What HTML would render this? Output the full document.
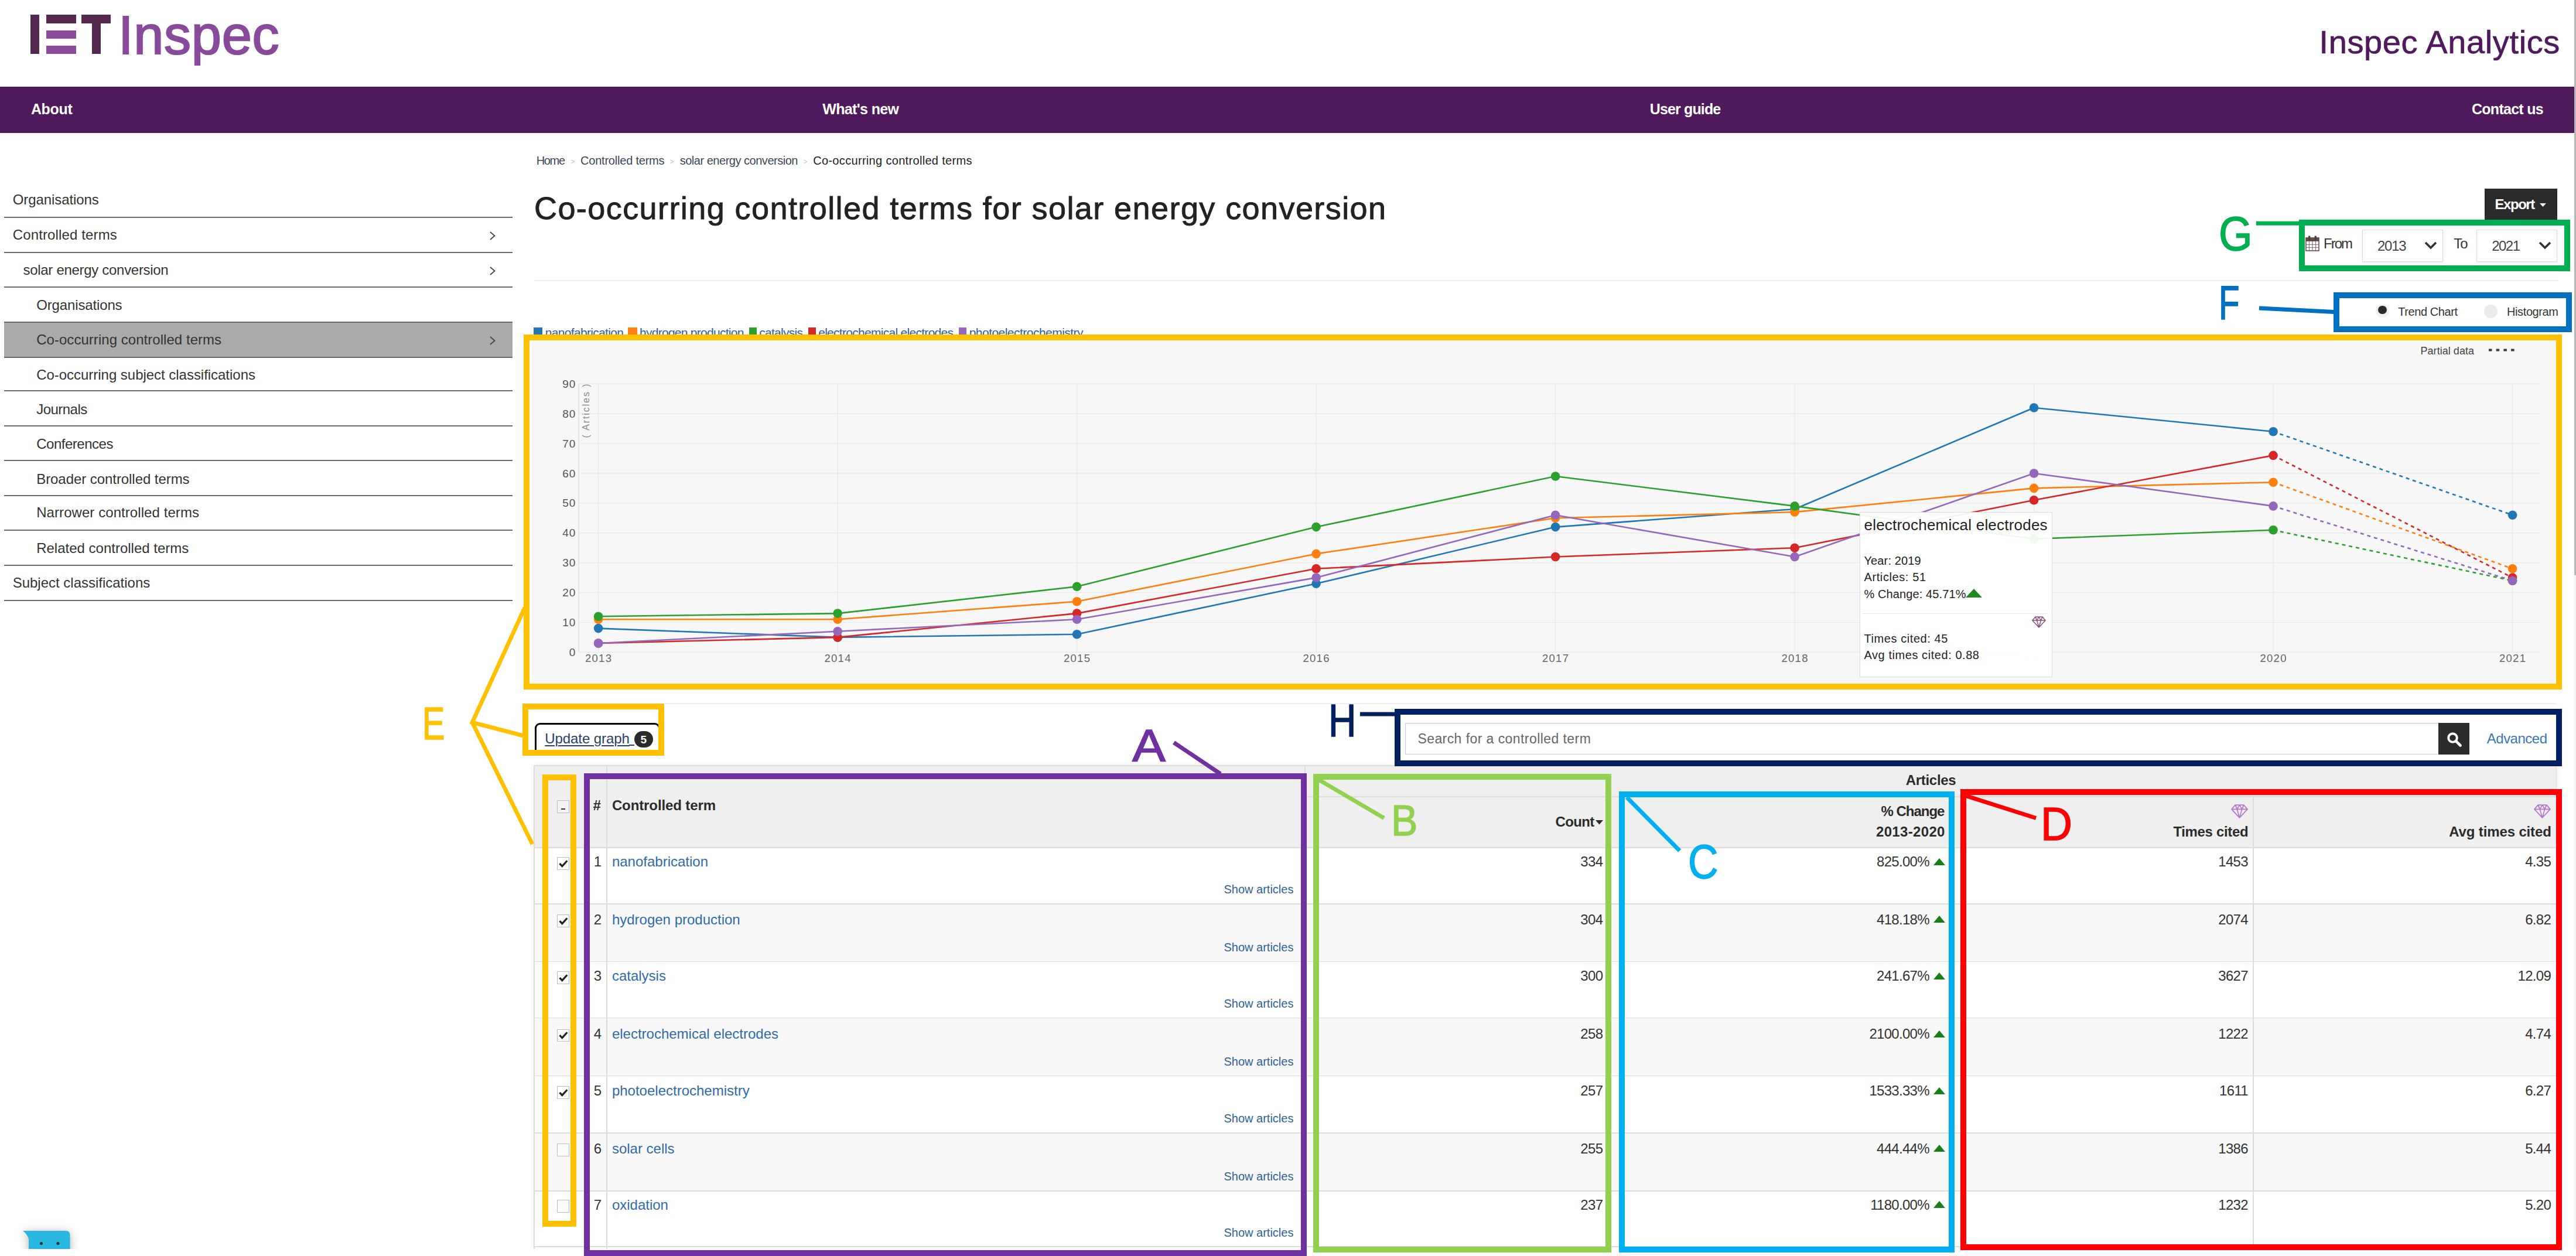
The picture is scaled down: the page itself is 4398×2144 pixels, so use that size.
<!DOCTYPE html>
<html lang="en">
<head>
<meta charset="utf-8">
<title>Inspec Analytics - Co-occurring controlled terms for solar energy conversion</title>
<style>
html,body{margin:0;padding:0;background:#fff;}
body{width:4398px;height:2144px;position:relative;overflow:hidden;font-family:"Liberation Sans",sans-serif;font-size:24px;color:#333;}
.a{position:absolute;white-space:nowrap;}
.bx{box-sizing:content-box;}
svg{position:absolute;overflow:visible;}
</style>
</head>
<body>
<div class="a" role="img" aria-label="IET" title="IET" style="left:0;top:0;width:200px;height:120px;">
<div class="a" style="left:52.4px;top:25.3px;width:15.0px;height:66.7px;background:#552850;"></div>
<div class="a" style="left:79.4px;top:25.3px;width:50.8px;height:14.5px;background:#552850;"></div>
<div class="a" style="left:79.4px;top:51.9px;width:50.8px;height:14.0px;background:#8b4c9c;"></div>
<div class="a" style="left:79.4px;top:78.3px;width:50.8px;height:13.7px;background:#8b4c9c;"></div>
<div class="a" style="left:139.0px;top:25.3px;width:50.3px;height:14.5px;background:#552850;"></div>
<div class="a" style="left:156.7px;top:25.3px;width:15.3px;height:66.7px;background:#552850;"></div>
</div>
<div class="a" style="top:14.1px;font-size:92px;line-height:92px;color:#8a4a9b;letter-spacing:0.69px;left:202.0px;-webkit-text-stroke:2.2px #8a4a9b;">Inspec</div>
<div class="a" style="top:43.8px;font-size:56px;line-height:56px;color:#4f1a5c;letter-spacing:0.62px;left:3959.5px;-webkit-text-stroke:0.7px #4f1a5c;">Inspec Analytics</div>
<div class="a" style="left:0.0px;top:148.0px;width:4395.0px;height:79.0px;background:#4f1a5c;"></div>
<div class="a" style="top:174.4px;font-size:25px;line-height:25px;color:#fff;font-weight:bold;letter-spacing:-0.32px;left:52.9px;">About</div>
<div class="a" style="top:174.4px;font-size:25px;line-height:25px;color:#fff;font-weight:bold;letter-spacing:-0.65px;left:1404.3px;">What's new</div>
<div class="a" style="top:174.4px;font-size:25px;line-height:25px;color:#fff;font-weight:bold;letter-spacing:-0.86px;left:2816.8px;">User guide</div>
<div class="a" style="top:174.4px;font-size:25px;line-height:25px;color:#fff;font-weight:bold;letter-spacing:-0.73px;left:4220.0px;">Contact us</div>
<div class="a" style="left:4395.0px;top:0.0px;width:3.0px;height:2132.0px;background:#f4f4f4;"></div>
<div class="a" style="left:4395.0px;top:0.0px;width:3.0px;height:981.5px;background:#b9b9b9;"></div>
<div class="a" style="left:7.0px;top:549.8px;width:867.6px;height:60.5px;background:#aaaaaa;"></div>
<div class="a" style="top:329.2px;font-size:24px;line-height:24px;letter-spacing:-0.08px;left:21.7px;">Organisations</div>
<div class="a" style="left:7.0px;top:369.9px;width:867.6px;height:2.0px;background:#6a6a6a;"></div>
<div class="a" style="top:389.3px;font-size:24px;line-height:24px;letter-spacing:0.14px;left:21.7px;">Controlled terms</div>
<div class="a" style="left:7.0px;top:429.7px;width:867.6px;height:2.0px;background:#6a6a6a;"></div>
<svg style="left:834px;top:392.3px" width="14" height="20" viewBox="0 0 14 20"><path d="M3 4 L10.5 10.5 L3 17" fill="none" stroke="#444" stroke-width="1.8"/></svg>
<div class="a" style="top:449.4px;font-size:24px;line-height:24px;letter-spacing:-0.30px;left:39.5px;">solar energy conversion</div>
<div class="a" style="left:7.0px;top:489.4px;width:867.6px;height:2.0px;background:#6a6a6a;"></div>
<svg style="left:834px;top:452.4px" width="14" height="20" viewBox="0 0 14 20"><path d="M3 4 L10.5 10.5 L3 17" fill="none" stroke="#444" stroke-width="1.8"/></svg>
<div class="a" style="top:508.8px;font-size:24px;line-height:24px;letter-spacing:-0.14px;left:62.2px;">Organisations</div>
<div class="a" style="left:7.0px;top:548.8px;width:867.6px;height:2.0px;background:#6a6a6a;"></div>
<div class="a" style="top:568.2px;font-size:24px;line-height:24px;letter-spacing:0.04px;left:62.2px;">Co-occurring controlled terms</div>
<div class="a" style="left:7.0px;top:609.3px;width:867.6px;height:2.0px;background:#6a6a6a;"></div>
<svg style="left:834px;top:571.2px" width="14" height="20" viewBox="0 0 14 20"><path d="M3 4 L10.5 10.5 L3 17" fill="none" stroke="#444" stroke-width="1.8"/></svg>
<div class="a" style="top:627.6px;font-size:24px;line-height:24px;letter-spacing:-0.03px;left:62.2px;">Co-occurring subject classifications</div>
<div class="a" style="left:7.0px;top:665.9px;width:867.6px;height:2.0px;background:#6a6a6a;"></div>
<div class="a" style="top:687.0px;font-size:24px;line-height:24px;letter-spacing:-0.53px;left:62.2px;">Journals</div>
<div class="a" style="left:7.0px;top:725.6px;width:867.6px;height:2.0px;background:#6a6a6a;"></div>
<div class="a" style="top:746.4px;font-size:24px;line-height:24px;letter-spacing:-0.48px;left:62.2px;">Conferences</div>
<div class="a" style="left:7.0px;top:785.3px;width:867.6px;height:2.0px;background:#6a6a6a;"></div>
<div class="a" style="top:806.2px;font-size:24px;line-height:24px;letter-spacing:-0.06px;left:62.2px;">Broader controlled terms</div>
<div class="a" style="left:7.0px;top:845.0px;width:867.6px;height:2.0px;background:#6a6a6a;"></div>
<div class="a" style="top:863.3px;font-size:24px;line-height:24px;letter-spacing:0.07px;left:62.2px;">Narrower controlled terms</div>
<div class="a" style="left:7.0px;top:904.4px;width:867.6px;height:2.0px;background:#6a6a6a;"></div>
<div class="a" style="top:923.5px;font-size:24px;line-height:24px;letter-spacing:0.00px;left:62.2px;">Related controlled terms</div>
<div class="a" style="left:7.0px;top:964.2px;width:867.6px;height:2.0px;background:#6a6a6a;"></div>
<div class="a" style="top:982.9px;font-size:24px;line-height:24px;letter-spacing:-0.01px;left:21.7px;">Subject classifications</div>
<div class="a" style="left:7.0px;top:1024.0px;width:867.6px;height:2.0px;background:#6a6a6a;"></div>
<div class="a" style="left:7.0px;top:548.8px;width:867.6px;height:2.0px;background:#6a6a6a;"></div>
<div class="a" style="top:263.8px;font-size:20px;line-height:20px;color:#3a4756;letter-spacing:-1.32px;left:915.7px;">Home</div>
<div class="a" style="top:269.5px;font-size:12px;line-height:12px;color:#c4c4c4;left:974.5px;">&gt;</div>
<div class="a" style="top:263.8px;font-size:20px;line-height:20px;color:#3a4756;letter-spacing:-0.21px;left:991.0px;">Controlled terms</div>
<div class="a" style="top:269.5px;font-size:12px;line-height:12px;color:#c4c4c4;left:1143.5px;">&gt;</div>
<div class="a" style="top:263.8px;font-size:20px;line-height:20px;color:#3a4756;letter-spacing:-0.48px;left:1160.7px;">solar energy conversion</div>
<div class="a" style="top:269.5px;font-size:12px;line-height:12px;color:#c4c4c4;left:1371.5px;">&gt;</div>
<div class="a" style="top:263.8px;font-size:20px;line-height:20px;color:#222;letter-spacing:0.32px;left:1388.2px;">Co-occurring controlled terms</div>
<div class="a" style="top:328.3px;font-size:54px;line-height:54px;color:#222;letter-spacing:1.42px;left:912.0px;-webkit-text-stroke:0.9px #222;">Co-occurring controlled terms for solar energy conversion</div>
<div class="a" style="left:912.0px;top:478.0px;width:3456.0px;height:1.5px;background:#eeeeee;"></div>
<div class="a" style="left:4241.5px;top:321.7px;width:124.0px;height:54.0px;background:#2b2b2b;"></div>
<div class="a" style="top:336.9px;font-size:24px;line-height:24px;color:#fff;font-weight:bold;letter-spacing:-1.48px;left:4259.6px;">Export</div>
<svg style="left:4335.5px;top:347px" width="11" height="6" viewBox="0 0 11 6"><path d="M0 0 H11 L5.5 6 Z" fill="#fff"/></svg>
<svg style="left:3936px;top:402px" width="24" height="27" viewBox="0 0 24 27"><rect x="1" y="4" width="22" height="22" fill="#fff" stroke="#6b4a4a" stroke-width="1.6"/><rect x="1" y="4" width="22" height="6" fill="#6b4a4a"/><path d="M1 15.5H23 M1 20.5H23 M6.5 10V26 M12 10V26 M17.5 10V26" stroke="#8a6f7a" stroke-width="1.2"/><rect x="5" y="0.5" width="3.4" height="7" rx="1.2" fill="#444"/><rect x="15.6" y="0.5" width="3.4" height="7" rx="1.2" fill="#444"/></svg>
<div class="a" style="top:404.4px;font-size:24px;line-height:24px;letter-spacing:-2.00px;left:3967.0px;">From</div>
<div class="a" style="top:404.4px;font-size:24px;line-height:24px;letter-spacing:-0.95px;left:4189.2px;">To</div>
<div class="a" style="left:4033.3px;top:391.6px;width:136.2px;height:53px;border:1px solid #ddd;background:#fff;box-shadow:0 1px 2px rgba(0,0,0,.12);"></div>
<div class="a" style="top:408.4px;font-size:24px;line-height:24px;color:#444;letter-spacing:-1.23px;left:4059.0px;">2013</div>
<svg style="left:4139px;top:411.5px" width="22" height="14" viewBox="0 0 22 14"><path d="M2 2 L11 11 L20 2" fill="none" stroke="#333" stroke-width="3.6"/></svg>
<div class="a" style="left:4228px;top:391.6px;width:136.0px;height:53px;border:1px solid #ddd;background:#fff;box-shadow:0 1px 2px rgba(0,0,0,.12);"></div>
<div class="a" style="top:408.4px;font-size:24px;line-height:24px;color:#444;letter-spacing:-1.53px;left:4254.2px;">2021</div>
<svg style="left:4333.6px;top:411.5px" width="22" height="14" viewBox="0 0 22 14"><path d="M2 2 L11 11 L20 2" fill="none" stroke="#333" stroke-width="3.6"/></svg>
<div class="a" style="left:4055.5px;top:519px;width:23px;height:23px;border-radius:50%;background:#f0f0f0;"></div>
<div class="a" style="left:4059.8px;top:521.7px;width:14.8px;height:14.8px;border-radius:50%;background:#2a2a2a;"></div>
<div class="a" style="left:4241.3px;top:519.5px;width:23px;height:23px;border-radius:50%;background:#eaeaea;"></div>
<div class="a" style="top:522.4px;font-size:20px;line-height:20px;letter-spacing:-0.43px;left:4094.3px;">Trend Chart</div>
<div class="a" style="top:522.4px;font-size:20px;line-height:20px;letter-spacing:-0.39px;left:4280.0px;">Histogram</div>
<div class="a" style="left:911.4px;top:559.0px;width:15.0px;height:15.0px;background:#1f77b4;"></div>
<div class="a" style="top:557.2px;font-size:21px;line-height:21px;color:#2a5d9c;letter-spacing:-0.67px;left:930.7px;">nanofabrication</div>
<div class="a" style="left:1072.2px;top:559.0px;width:15.5px;height:15.0px;background:#ff7f0e;"></div>
<div class="a" style="top:557.2px;font-size:21px;line-height:21px;color:#2a5d9c;letter-spacing:-0.73px;left:1092.0px;">hydrogen production</div>
<div class="a" style="left:1278.5px;top:559.0px;width:13.4px;height:15.0px;background:#2ca02c;"></div>
<div class="a" style="top:557.2px;font-size:21px;line-height:21px;color:#2a5d9c;letter-spacing:-0.72px;left:1296.2px;">catalysis</div>
<div class="a" style="left:1379.6px;top:559.0px;width:13.3px;height:15.0px;background:#d62728;"></div>
<div class="a" style="top:557.2px;font-size:21px;line-height:21px;color:#2a5d9c;letter-spacing:-0.71px;left:1397.2px;">electrochemical electrodes</div>
<div class="a" style="left:1636.7px;top:559.0px;width:12.9px;height:15.0px;background:#9467bd;"></div>
<div class="a" style="top:557.2px;font-size:21px;line-height:21px;color:#2a5d9c;letter-spacing:-0.53px;left:1654.7px;">photoelectrochemistry</div>
<div class="a" style="left:904.0px;top:581.0px;width:3461.0px;height:586.0px;background:#fff;"></div>
<div class="a" style="left:908.5px;top:582.0px;width:3456.5px;height:585.0px;background:#f7f7f7;box-shadow:0 0 3px 1px #f7f7f7;"></div>
<svg style="left:0;top:0" width="4398" height="1180" viewBox="0 0 4398 1180" font-family="Liberation Sans, sans-serif">
<line x1="988" x2="4337.4" y1="1113.3" y2="1113.3" stroke="#e9e9e9" stroke-width="1.4"/>
<line x1="988" x2="4337.4" y1="1062.4" y2="1062.4" stroke="#e9e9e9" stroke-width="1.4"/>
<line x1="988" x2="4337.4" y1="1011.5" y2="1011.5" stroke="#e9e9e9" stroke-width="1.4"/>
<line x1="988" x2="4337.4" y1="960.6" y2="960.6" stroke="#e9e9e9" stroke-width="1.4"/>
<line x1="988" x2="4337.4" y1="909.7" y2="909.7" stroke="#e9e9e9" stroke-width="1.4"/>
<line x1="988" x2="4337.4" y1="858.8" y2="858.8" stroke="#e9e9e9" stroke-width="1.4"/>
<line x1="988" x2="4337.4" y1="808.0" y2="808.0" stroke="#e9e9e9" stroke-width="1.4"/>
<line x1="988" x2="4337.4" y1="757.1" y2="757.1" stroke="#e9e9e9" stroke-width="1.4"/>
<line x1="988" x2="4337.4" y1="706.2" y2="706.2" stroke="#e9e9e9" stroke-width="1.4"/>
<line x1="988" x2="4337.4" y1="655.3" y2="655.3" stroke="#e9e9e9" stroke-width="1.4"/>
<line x1="1021.6" x2="1021.6" y1="655.3" y2="1113.3" stroke="#e9e9e9" stroke-width="1.4"/>
<line x1="1430.1" x2="1430.1" y1="655.3" y2="1113.3" stroke="#e9e9e9" stroke-width="1.4"/>
<line x1="1838.6" x2="1838.6" y1="655.3" y2="1113.3" stroke="#e9e9e9" stroke-width="1.4"/>
<line x1="2247.1" x2="2247.1" y1="655.3" y2="1113.3" stroke="#e9e9e9" stroke-width="1.4"/>
<line x1="2655.6" x2="2655.6" y1="655.3" y2="1113.3" stroke="#e9e9e9" stroke-width="1.4"/>
<line x1="3064.1" x2="3064.1" y1="655.3" y2="1113.3" stroke="#e9e9e9" stroke-width="1.4"/>
<line x1="3472.6" x2="3472.6" y1="655.3" y2="1113.3" stroke="#e9e9e9" stroke-width="1.4"/>
<line x1="3881.1" x2="3881.1" y1="655.3" y2="1113.3" stroke="#e9e9e9" stroke-width="1.4"/>
<line x1="4289.6" x2="4289.6" y1="655.3" y2="1113.3" stroke="#e9e9e9" stroke-width="1.4"/>
<line x1="988" x2="988" y1="655.3" y2="1113.3" stroke="#e2e2e2" stroke-width="1.6"/>
<text x="983.4" y="1119.8" text-anchor="end" font-size="19" fill="#555" letter-spacing="1">0</text>
<text x="983.4" y="1068.9" text-anchor="end" font-size="19" fill="#555" letter-spacing="1">10</text>
<text x="983.4" y="1018.0" text-anchor="end" font-size="19" fill="#555" letter-spacing="1">20</text>
<text x="983.4" y="967.1" text-anchor="end" font-size="19" fill="#555" letter-spacing="1">30</text>
<text x="983.4" y="916.2" text-anchor="end" font-size="19" fill="#555" letter-spacing="1">40</text>
<text x="983.4" y="865.3" text-anchor="end" font-size="19" fill="#555" letter-spacing="1">50</text>
<text x="983.4" y="814.5" text-anchor="end" font-size="19" fill="#555" letter-spacing="1">60</text>
<text x="983.4" y="763.6" text-anchor="end" font-size="19" fill="#555" letter-spacing="1">70</text>
<text x="983.4" y="712.7" text-anchor="end" font-size="19" fill="#555" letter-spacing="1">80</text>
<text x="983.4" y="661.8" text-anchor="end" font-size="19" fill="#555" letter-spacing="1">90</text>
<text x="1022.1" y="1130.3" text-anchor="middle" font-size="18.5" fill="#666" letter-spacing="1.3">2013</text>
<text x="1430.6" y="1130.3" text-anchor="middle" font-size="18.5" fill="#666" letter-spacing="1.3">2014</text>
<text x="1839.1" y="1130.3" text-anchor="middle" font-size="18.5" fill="#666" letter-spacing="1.3">2015</text>
<text x="2247.6" y="1130.3" text-anchor="middle" font-size="18.5" fill="#666" letter-spacing="1.3">2016</text>
<text x="2656.1" y="1130.3" text-anchor="middle" font-size="18.5" fill="#666" letter-spacing="1.3">2017</text>
<text x="3064.6" y="1130.3" text-anchor="middle" font-size="18.5" fill="#666" letter-spacing="1.3">2018</text>
<text x="3473.1" y="1130.3" text-anchor="middle" font-size="18.5" fill="#e6e6e6" letter-spacing="1.3">2019</text>
<text x="3881.6" y="1130.3" text-anchor="middle" font-size="18.5" fill="#666" letter-spacing="1.3">2020</text>
<text x="4290.1" y="1130.3" text-anchor="middle" font-size="18.5" fill="#666" letter-spacing="1.3">2021</text>
<text transform="translate(1006,700.6) rotate(-90)" text-anchor="middle" font-size="16" fill="#8a8a8a" letter-spacing="1.9">( Articles )</text>
<polyline points="1021.6,1072.6 1430.1,1087.9 1838.6,1082.8 2247.1,996.3 2655.6,899.6 3064.1,869.0 3472.6,696.0 3881.1,736.7" fill="none" stroke="#1f77b4" stroke-width="2.6" stroke-linejoin="round"/>
<line x1="3881.1" y1="736.7" x2="4289.6" y2="879.2" stroke="#1f77b4" stroke-width="2.6" stroke-dasharray="6 6"/>
<polyline points="1021.6,1057.3 1430.1,1057.3 1838.6,1026.8 2247.1,945.4 2655.6,884.3 3064.1,874.1 3472.6,833.4 3881.1,823.2" fill="none" stroke="#ff7f0e" stroke-width="2.6" stroke-linejoin="round"/>
<line x1="3881.1" y1="823.2" x2="4289.6" y2="970.8" stroke="#ff7f0e" stroke-width="2.6" stroke-dasharray="6 6"/>
<polyline points="1021.6,1052.2 1430.1,1047.1 1838.6,1001.3 2247.1,899.6 2655.6,813.0 3064.1,863.9 3472.6,919.9 3881.1,904.7" fill="none" stroke="#2ca02c" stroke-width="2.6" stroke-linejoin="round"/>
<line x1="3881.1" y1="904.7" x2="4289.6" y2="991.2" stroke="#2ca02c" stroke-width="2.6" stroke-dasharray="6 6"/>
<polyline points="1021.6,1098.0 1430.1,1087.9 1838.6,1047.1 2247.1,970.8 2655.6,950.5 3064.1,935.2 3472.6,853.8 3881.1,777.4" fill="none" stroke="#d62728" stroke-width="2.6" stroke-linejoin="round"/>
<line x1="3881.1" y1="777.4" x2="4289.6" y2="986.1" stroke="#d62728" stroke-width="2.6" stroke-dasharray="6 6"/>
<polyline points="1021.6,1098.0 1430.1,1077.7 1838.6,1057.3 2247.1,986.1 2655.6,879.2 3064.1,950.5 3472.6,808.0 3881.1,863.9" fill="none" stroke="#9467bd" stroke-width="2.6" stroke-linejoin="round"/>
<line x1="3881.1" y1="863.9" x2="4289.6" y2="991.2" stroke="#9467bd" stroke-width="2.6" stroke-dasharray="6 6"/>
<circle cx="1021.6" cy="1072.6" r="7.8" fill="#1f77b4"/>
<circle cx="1430.1" cy="1087.9" r="7.8" fill="#1f77b4"/>
<circle cx="1838.6" cy="1082.8" r="7.8" fill="#1f77b4"/>
<circle cx="2247.1" cy="996.3" r="7.8" fill="#1f77b4"/>
<circle cx="2655.6" cy="899.6" r="7.8" fill="#1f77b4"/>
<circle cx="3064.1" cy="869.0" r="7.8" fill="#1f77b4"/>
<circle cx="3472.6" cy="696.0" r="7.8" fill="#1f77b4"/>
<circle cx="3881.1" cy="736.7" r="7.8" fill="#1f77b4"/>
<circle cx="4289.6" cy="879.2" r="7.8" fill="#1f77b4"/>
<circle cx="1021.6" cy="1057.3" r="7.8" fill="#ff7f0e"/>
<circle cx="1430.1" cy="1057.3" r="7.8" fill="#ff7f0e"/>
<circle cx="1838.6" cy="1026.8" r="7.8" fill="#ff7f0e"/>
<circle cx="2247.1" cy="945.4" r="7.8" fill="#ff7f0e"/>
<circle cx="2655.6" cy="884.3" r="7.8" fill="#ff7f0e"/>
<circle cx="3064.1" cy="874.1" r="7.8" fill="#ff7f0e"/>
<circle cx="3472.6" cy="833.4" r="7.8" fill="#ff7f0e"/>
<circle cx="3881.1" cy="823.2" r="7.8" fill="#ff7f0e"/>
<circle cx="4289.6" cy="970.8" r="7.8" fill="#ff7f0e"/>
<circle cx="1021.6" cy="1052.2" r="7.8" fill="#2ca02c"/>
<circle cx="1430.1" cy="1047.1" r="7.8" fill="#2ca02c"/>
<circle cx="1838.6" cy="1001.3" r="7.8" fill="#2ca02c"/>
<circle cx="2247.1" cy="899.6" r="7.8" fill="#2ca02c"/>
<circle cx="2655.6" cy="813.0" r="7.8" fill="#2ca02c"/>
<circle cx="3064.1" cy="863.9" r="7.8" fill="#2ca02c"/>
<circle cx="3472.6" cy="919.9" r="7.8" fill="#2ca02c"/>
<circle cx="3881.1" cy="904.7" r="7.8" fill="#2ca02c"/>
<circle cx="4289.6" cy="991.2" r="7.8" fill="#2ca02c"/>
<circle cx="1021.6" cy="1098.0" r="7.8" fill="#d62728"/>
<circle cx="1430.1" cy="1087.9" r="7.8" fill="#d62728"/>
<circle cx="1838.6" cy="1047.1" r="7.8" fill="#d62728"/>
<circle cx="2247.1" cy="970.8" r="7.8" fill="#d62728"/>
<circle cx="2655.6" cy="950.5" r="7.8" fill="#d62728"/>
<circle cx="3064.1" cy="935.2" r="7.8" fill="#d62728"/>
<circle cx="3472.6" cy="853.8" r="7.8" fill="#d62728"/>
<circle cx="3881.1" cy="777.4" r="7.8" fill="#d62728"/>
<circle cx="4289.6" cy="986.1" r="7.8" fill="#d62728"/>
<circle cx="1021.6" cy="1098.0" r="7.8" fill="#9467bd"/>
<circle cx="1430.1" cy="1077.7" r="7.8" fill="#9467bd"/>
<circle cx="1838.6" cy="1057.3" r="7.8" fill="#9467bd"/>
<circle cx="2247.1" cy="986.1" r="7.8" fill="#9467bd"/>
<circle cx="2655.6" cy="879.2" r="7.8" fill="#9467bd"/>
<circle cx="3064.1" cy="950.5" r="7.8" fill="#9467bd"/>
<circle cx="3472.6" cy="808.0" r="7.8" fill="#9467bd"/>
<circle cx="3881.1" cy="863.9" r="7.8" fill="#9467bd"/>
<circle cx="4289.6" cy="991.2" r="7.8" fill="#9467bd"/>
<text x="4132.5" y="604.5" font-size="18" fill="#444" textLength="91.5" lengthAdjust="spacing">Partial data</text>
<rect x="4249.0" y="595.5" width="5.5" height="4" fill="#4a3340"/>
<rect x="4261.7" y="595.5" width="5.5" height="4" fill="#4a3340"/>
<rect x="4274.4" y="595.5" width="5.5" height="4" fill="#4a3340"/>
<rect x="4287.1" y="595.5" width="5.5" height="4" fill="#4a3340"/>
</svg>
<div class="a" style="left:3175px;top:873.6px;width:327px;height:280px;background:rgba(255,255,255,.93);border:1px solid #ddd;"></div>
<div class="a" style="top:883.0px;font-size:26px;line-height:26px;color:#222;letter-spacing:0.21px;left:3182.5px;">electrochemical electrodes</div>
<div class="a" style="top:946.6px;font-size:20px;line-height:20px;color:#222;letter-spacing:0.12px;left:3182.5px;">Year: 2019</div>
<div class="a" style="top:974.6px;font-size:20px;line-height:20px;color:#222;letter-spacing:0.60px;left:3182.5px;">Articles: 51</div>
<div class="a" style="top:1004.1px;font-size:20px;line-height:20px;color:#222;letter-spacing:0.11px;left:3182.5px;">% Change: 45.71%</div>
<svg style="left:3356px;top:1005px" width="28" height="15" viewBox="0 0 28 15"><path d="M0 15 L14 0 L28 15 Z" fill="#1e8a1e"/></svg>
<div class="a" style="left:3180.0px;top:1047.0px;width:317.0px;height:1.2px;background:#e5e5e5;"></div>
<svg style="left:3468.5px;top:1052px" width="24" height="20" viewBox="0 0 28 23"><path d="M1 8 L7 1 H21 L27 8 L14 22 Z M1 8 H27 M7 1 L10 8 L14 22 L18 8 L21 1 M10 8 L14 1 L18 8" fill="none" stroke="#8b4f7d" stroke-width="1.7" stroke-linejoin="round"/></svg>
<div class="a" style="top:1079.6px;font-size:20px;line-height:20px;color:#222;letter-spacing:0.57px;left:3182.5px;">Times cited: 45</div>
<div class="a" style="top:1107.6px;font-size:20px;line-height:20px;color:#222;letter-spacing:0.56px;left:3182.5px;">Avg times cited: 0.88</div>
<div class="a" style="left:912.0px;top:1200.3px;width:3453.0px;height:1.5px;background:#eeeeee;"></div>
<div class="a" style="left:913.3px;top:1234.3px;width:208px;height:50px;border:3.5px solid #000;border-bottom:none;border-radius:9px 9px 0 0;background:#fff;"></div>
<div class="a" style="top:1248.5px;font-size:24px;line-height:24px;color:#2a3f6a;letter-spacing:-0.09px;left:930.3px;text-decoration:underline;text-decoration-thickness:2px;text-underline-offset:3px;">Update graph</div>
<div class="a" style="left:1074.0px;top:1271.2px;width:9.0px;height:2.0px;background:#2a3f6a;"></div>
<div class="a" style="left:1083.3px;top:1248.2px;width:32px;height:28px;border-radius:14px;background:#2b2b2b;"></div>
<div class="a" style="top:1252.9px;font-size:19px;line-height:19px;color:#fff;font-weight:bold;left:1093.5px;">5</div>
<div class="a" style="left:2398.9px;top:1234px;width:1765px;height:52px;border:1px solid #ccc;background:#fff;box-shadow:inset 0 1px 2px rgba(0,0,0,.08);"></div>
<div class="a" style="top:1249.8px;font-size:23px;line-height:23px;color:#666;letter-spacing:0.43px;left:2420.4px;">Search for a controlled term</div>
<div class="a" style="left:4163.2px;top:1234.4px;width:52.8px;height:53.3px;background:#2b2b2b;"></div>
<svg style="left:4176px;top:1248px" width="28" height="28" viewBox="0 0 28 28"><circle cx="11.5" cy="11.5" r="7.3" fill="none" stroke="#fff" stroke-width="4"/><path d="M17 17 L24.5 24.5" stroke="#fff" stroke-width="4.6" stroke-linecap="round"/></svg>
<div class="a" style="top:1248.7px;font-size:24px;line-height:24px;color:#3a76b5;letter-spacing:-0.51px;left:4245.8px;">Advanced</div>
<div class="a" style="left:912px;top:1307px;width:3453px;height:825.3px;box-shadow:0 0 10px rgba(0,0,0,.09);clip-path:inset(-14px -14px 0 -14px);"></div>
<div class="a" style="left:912.0px;top:1307.0px;width:3453.0px;height:140.2px;background:#efefef;"></div>
<div class="a" style="left:912.0px;top:1447.2px;width:3453.0px;height:95.8px;background:#fff;"></div>
<div class="a" style="left:912.0px;top:1543.0px;width:3453.0px;height:98.5px;background:#f8f8f8;"></div>
<div class="a" style="left:912.0px;top:1641.5px;width:3453.0px;height:95.9px;background:#fff;"></div>
<div class="a" style="left:912.0px;top:1737.4px;width:3453.0px;height:99.0px;background:#f8f8f8;"></div>
<div class="a" style="left:912.0px;top:1836.4px;width:3453.0px;height:97.4px;background:#fff;"></div>
<div class="a" style="left:912.0px;top:1933.8px;width:3453.0px;height:99.0px;background:#f8f8f8;"></div>
<div class="a" style="left:912.0px;top:2032.8px;width:3453.0px;height:95.2px;background:#fff;"></div>
<div class="a" style="left:912.0px;top:2128.0px;width:3453.0px;height:4.3px;background:#fff;"></div>
<div class="a" style="left:912.0px;top:1306.2px;width:3453.0px;height:1.6px;background:#dcdcdc;"></div>
<div class="a" style="left:2228.0px;top:1359.2px;width:2137.0px;height:1.6px;background:#dcdcdc;"></div>
<div class="a" style="left:912.0px;top:1446.2px;width:3453.0px;height:2.0px;background:#dcdcdc;"></div>
<div class="a" style="left:912.0px;top:1542.2px;width:3453.0px;height:1.6px;background:#dcdcdc;"></div>
<div class="a" style="left:912.0px;top:1640.7px;width:3453.0px;height:1.6px;background:#dcdcdc;"></div>
<div class="a" style="left:912.0px;top:1736.6px;width:3453.0px;height:1.6px;background:#dcdcdc;"></div>
<div class="a" style="left:912.0px;top:1835.6px;width:3453.0px;height:1.6px;background:#dcdcdc;"></div>
<div class="a" style="left:912.0px;top:1933.0px;width:3453.0px;height:1.6px;background:#dcdcdc;"></div>
<div class="a" style="left:912.0px;top:2032.0px;width:3453.0px;height:1.6px;background:#dcdcdc;"></div>
<div class="a" style="left:912.0px;top:2127.2px;width:3453.0px;height:1.6px;background:#dcdcdc;"></div>
<div class="a" style="left:911.2px;top:1307.0px;width:1.6px;height:825.3px;background:#dcdcdc;"></div>
<div class="a" style="left:1035.0px;top:1307.0px;width:1.6px;height:825.3px;background:#dcdcdc;"></div>
<div class="a" style="left:2227.2px;top:1307.0px;width:1.6px;height:825.3px;background:#dcdcdc;"></div>
<div class="a" style="left:2744.8px;top:1360.0px;width:1.6px;height:772.3px;background:#dcdcdc;"></div>
<div class="a" style="left:3328.2px;top:1360.0px;width:1.6px;height:772.3px;background:#dcdcdc;"></div>
<div class="a" style="left:3846.4px;top:1360.0px;width:1.6px;height:772.3px;background:#dcdcdc;"></div>
<div class="a" style="left:4363.5px;top:1307.0px;width:1.6px;height:825.3px;background:#dcdcdc;"></div>
<div class="a" style="left:950.5px;top:1366.4px;width:19.7px;height:20.1px;border:1px solid #bdbdbd;background:#f3f3f3;"></div>
<div class="a" style="left:957.5px;top:1379.6px;width:7.0px;height:2.2px;background:#333;"></div>
<div class="a" style="top:1363.1px;font-size:24px;line-height:24px;color:#2b2b2b;font-weight:bold;letter-spacing:0.00px;left:1012.5px;">#</div>
<div class="a" style="top:1363.1px;font-size:24px;line-height:24px;color:#2b2b2b;font-weight:bold;letter-spacing:-0.11px;left:1044.9px;">Controlled term</div>
<div class="a" style="top:1320.3px;font-size:24px;line-height:24px;color:#2b2b2b;font-weight:bold;letter-spacing:-0.29px;left:3253.7px;">Articles</div>
<div class="a" style="top:1391.2px;font-size:24px;line-height:24px;color:#2b2b2b;font-weight:bold;letter-spacing:-0.65px;left:2655.5px;">Count</div>
<svg style="left:2724px;top:1399.5px" width="13" height="7.5" viewBox="0 0 13 7.5"><path d="M0 0 H13 L6.5 7.5 Z" fill="#2b2b2b"/></svg>
<div class="a" style="top:1373.1px;font-size:24px;line-height:24px;color:#2b2b2b;font-weight:bold;letter-spacing:-1.03px;left:3211.6px;">% Change</div>
<div class="a" style="top:1407.5px;font-size:24px;line-height:24px;color:#2b2b2b;font-weight:bold;letter-spacing:0.33px;left:3203.0px;">2013-2020</div>
<div class="a" style="top:1407.5px;font-size:24px;line-height:24px;color:#2b2b2b;font-weight:bold;letter-spacing:-0.34px;left:3710.4px;">Times cited</div>
<div class="a" style="top:1407.5px;font-size:24px;line-height:24px;color:#2b2b2b;font-weight:bold;letter-spacing:-0.14px;left:4181.3px;">Avg times cited</div>
<svg style="left:3809px;top:1372.5px" width="29" height="24" viewBox="0 0 28 23"><path d="M1 8 L7 1 H21 L27 8 L14 22 Z M1 8 H27 M7 1 L10 8 L14 22 L18 8 L21 1 M10 8 L14 1 L18 8" fill="none" stroke="#b678c9" stroke-width="1.7" stroke-linejoin="round"/></svg>
<svg style="left:4326.3px;top:1372.5px" width="29" height="24" viewBox="0 0 28 23"><path d="M1 8 L7 1 H21 L27 8 L14 22 Z M1 8 H27 M7 1 L10 8 L14 22 L18 8 L21 1 M10 8 L14 1 L18 8" fill="none" stroke="#b678c9" stroke-width="1.7" stroke-linejoin="round"/></svg>
<div class="a" style="left:950.5px;top:1462.9px;width:19.7px;height:19.7px;border:1px solid #bdbdbd;background:#fff;"></div>
<svg style="left:953.5px;top:1466.6px" width="16" height="14" viewBox="0 0 16 14"><path d="M1.5 7.2 L5.8 11.6 L14.3 2.2" fill="none" stroke="#222" stroke-width="3.2"/></svg>
<div class="a" style="top:1459.1px;font-size:24px;line-height:24px;right:3371.0px;">1</div>
<div class="a" style="top:1459.1px;font-size:24px;line-height:24px;color:#2f6aa8;left:1044.9px;">nanofabrication</div>
<div class="a" style="top:1508.2px;font-size:20px;line-height:20px;color:#2f5f96;right:2189.6px;">Show articles</div>
<div class="a" style="top:1459.1px;font-size:24px;line-height:24px;right:1661.7px;letter-spacing:-0.7px;">334</div>
<div class="a" style="top:1459.1px;font-size:24px;line-height:24px;right:1104.1px;letter-spacing:-0.7px;">825.00%</div>
<svg style="left:3300.6px;top:1464.9px" width="20" height="12" viewBox="0 0 20 12"><path d="M0 12 L10 0 L20 12 Z" fill="#1a7f1a"/></svg>
<div class="a" style="top:1459.1px;font-size:24px;line-height:24px;right:560.1px;letter-spacing:-0.7px;">1453</div>
<div class="a" style="top:1459.1px;font-size:24px;line-height:24px;right:42.9px;letter-spacing:-0.7px;">4.35</div>
<div class="a" style="left:950.5px;top:1561.4px;width:19.7px;height:19.7px;border:1px solid #bdbdbd;background:#fff;"></div>
<svg style="left:953.5px;top:1565.1px" width="16" height="14" viewBox="0 0 16 14"><path d="M1.5 7.2 L5.8 11.6 L14.3 2.2" fill="none" stroke="#222" stroke-width="3.2"/></svg>
<div class="a" style="top:1557.6px;font-size:24px;line-height:24px;right:3371.0px;">2</div>
<div class="a" style="top:1557.6px;font-size:24px;line-height:24px;color:#2f6aa8;left:1044.9px;">hydrogen production</div>
<div class="a" style="top:1606.7px;font-size:20px;line-height:20px;color:#2f5f96;right:2189.6px;">Show articles</div>
<div class="a" style="top:1557.6px;font-size:24px;line-height:24px;right:1661.7px;letter-spacing:-0.7px;">304</div>
<div class="a" style="top:1557.6px;font-size:24px;line-height:24px;right:1104.1px;letter-spacing:-0.7px;">418.18%</div>
<svg style="left:3300.6px;top:1563.4px" width="20" height="12" viewBox="0 0 20 12"><path d="M0 12 L10 0 L20 12 Z" fill="#1a7f1a"/></svg>
<div class="a" style="top:1557.6px;font-size:24px;line-height:24px;right:560.1px;letter-spacing:-0.7px;">2074</div>
<div class="a" style="top:1557.6px;font-size:24px;line-height:24px;right:42.9px;letter-spacing:-0.7px;">6.82</div>
<div class="a" style="left:950.5px;top:1658.1px;width:19.7px;height:19.7px;border:1px solid #bdbdbd;background:#fff;"></div>
<svg style="left:953.5px;top:1661.8px" width="16" height="14" viewBox="0 0 16 14"><path d="M1.5 7.2 L5.8 11.6 L14.3 2.2" fill="none" stroke="#222" stroke-width="3.2"/></svg>
<div class="a" style="top:1654.3px;font-size:24px;line-height:24px;right:3371.0px;">3</div>
<div class="a" style="top:1654.3px;font-size:24px;line-height:24px;color:#2f6aa8;left:1044.9px;">catalysis</div>
<div class="a" style="top:1703.4px;font-size:20px;line-height:20px;color:#2f5f96;right:2189.6px;">Show articles</div>
<div class="a" style="top:1654.3px;font-size:24px;line-height:24px;right:1661.7px;letter-spacing:-0.7px;">300</div>
<div class="a" style="top:1654.3px;font-size:24px;line-height:24px;right:1104.1px;letter-spacing:-0.7px;">241.67%</div>
<svg style="left:3300.6px;top:1660.1px" width="20" height="12" viewBox="0 0 20 12"><path d="M0 12 L10 0 L20 12 Z" fill="#1a7f1a"/></svg>
<div class="a" style="top:1654.3px;font-size:24px;line-height:24px;right:560.1px;letter-spacing:-0.7px;">3627</div>
<div class="a" style="top:1654.3px;font-size:24px;line-height:24px;right:42.9px;letter-spacing:-0.7px;">12.09</div>
<div class="a" style="left:950.5px;top:1756.7px;width:19.7px;height:19.7px;border:1px solid #bdbdbd;background:#fff;"></div>
<svg style="left:953.5px;top:1760.4px" width="16" height="14" viewBox="0 0 16 14"><path d="M1.5 7.2 L5.8 11.6 L14.3 2.2" fill="none" stroke="#222" stroke-width="3.2"/></svg>
<div class="a" style="top:1752.9px;font-size:24px;line-height:24px;right:3371.0px;">4</div>
<div class="a" style="top:1752.9px;font-size:24px;line-height:24px;color:#2f6aa8;left:1044.9px;">electrochemical electrodes</div>
<div class="a" style="top:1802.0px;font-size:20px;line-height:20px;color:#2f5f96;right:2189.6px;">Show articles</div>
<div class="a" style="top:1752.9px;font-size:24px;line-height:24px;right:1661.7px;letter-spacing:-0.7px;">258</div>
<div class="a" style="top:1752.9px;font-size:24px;line-height:24px;right:1104.1px;letter-spacing:-0.7px;">2100.00%</div>
<svg style="left:3300.6px;top:1758.7px" width="20" height="12" viewBox="0 0 20 12"><path d="M0 12 L10 0 L20 12 Z" fill="#1a7f1a"/></svg>
<div class="a" style="top:1752.9px;font-size:24px;line-height:24px;right:560.1px;letter-spacing:-0.7px;">1222</div>
<div class="a" style="top:1752.9px;font-size:24px;line-height:24px;right:42.9px;letter-spacing:-0.7px;">4.74</div>
<div class="a" style="left:950.5px;top:1854.1px;width:19.7px;height:19.7px;border:1px solid #bdbdbd;background:#fff;"></div>
<svg style="left:953.5px;top:1857.8px" width="16" height="14" viewBox="0 0 16 14"><path d="M1.5 7.2 L5.8 11.6 L14.3 2.2" fill="none" stroke="#222" stroke-width="3.2"/></svg>
<div class="a" style="top:1850.3px;font-size:24px;line-height:24px;right:3371.0px;">5</div>
<div class="a" style="top:1850.3px;font-size:24px;line-height:24px;color:#2f6aa8;left:1044.9px;">photoelectrochemistry</div>
<div class="a" style="top:1899.4px;font-size:20px;line-height:20px;color:#2f5f96;right:2189.6px;">Show articles</div>
<div class="a" style="top:1850.3px;font-size:24px;line-height:24px;right:1661.7px;letter-spacing:-0.7px;">257</div>
<div class="a" style="top:1850.3px;font-size:24px;line-height:24px;right:1104.1px;letter-spacing:-0.7px;">1533.33%</div>
<svg style="left:3300.6px;top:1856.1px" width="20" height="12" viewBox="0 0 20 12"><path d="M0 12 L10 0 L20 12 Z" fill="#1a7f1a"/></svg>
<div class="a" style="top:1850.3px;font-size:24px;line-height:24px;right:560.1px;letter-spacing:-0.7px;">1611</div>
<div class="a" style="top:1850.3px;font-size:24px;line-height:24px;right:42.9px;letter-spacing:-0.7px;">6.27</div>
<div class="a" style="left:950.5px;top:1952.3px;width:19.7px;height:19.7px;border:1px solid #bdbdbd;background:#fbfbfb;"></div>
<div class="a" style="top:1948.5px;font-size:24px;line-height:24px;right:3371.0px;">6</div>
<div class="a" style="top:1948.5px;font-size:24px;line-height:24px;color:#2f6aa8;left:1044.9px;">solar cells</div>
<div class="a" style="top:1997.6px;font-size:20px;line-height:20px;color:#2f5f96;right:2189.6px;">Show articles</div>
<div class="a" style="top:1948.5px;font-size:24px;line-height:24px;right:1661.7px;letter-spacing:-0.7px;">255</div>
<div class="a" style="top:1948.5px;font-size:24px;line-height:24px;right:1104.1px;letter-spacing:-0.7px;">444.44%</div>
<svg style="left:3300.6px;top:1954.3px" width="20" height="12" viewBox="0 0 20 12"><path d="M0 12 L10 0 L20 12 Z" fill="#1a7f1a"/></svg>
<div class="a" style="top:1948.5px;font-size:24px;line-height:24px;right:560.1px;letter-spacing:-0.7px;">1386</div>
<div class="a" style="top:1948.5px;font-size:24px;line-height:24px;right:42.9px;letter-spacing:-0.7px;">5.44</div>
<div class="a" style="left:950.5px;top:2048.4px;width:19.7px;height:19.7px;border:1px solid #bdbdbd;background:#fbfbfb;"></div>
<div class="a" style="top:2044.6px;font-size:24px;line-height:24px;right:3371.0px;">7</div>
<div class="a" style="top:2044.6px;font-size:24px;line-height:24px;color:#2f6aa8;left:1044.9px;">oxidation</div>
<div class="a" style="top:2093.7px;font-size:20px;line-height:20px;color:#2f5f96;right:2189.6px;">Show articles</div>
<div class="a" style="top:2044.6px;font-size:24px;line-height:24px;right:1661.7px;letter-spacing:-0.7px;">237</div>
<div class="a" style="top:2044.6px;font-size:24px;line-height:24px;right:1104.1px;letter-spacing:-0.7px;">1180.00%</div>
<svg style="left:3300.6px;top:2050.4px" width="20" height="12" viewBox="0 0 20 12"><path d="M0 12 L10 0 L20 12 Z" fill="#1a7f1a"/></svg>
<div class="a" style="top:2044.6px;font-size:24px;line-height:24px;right:560.1px;letter-spacing:-0.7px;">1232</div>
<div class="a" style="top:2044.6px;font-size:24px;line-height:24px;right:42.9px;letter-spacing:-0.7px;">5.20</div>
<div class="a" style="left:20px;top:2080px;width:130px;height:52.3px;overflow:hidden;"><svg style="left:0;top:0" width="130" height="70" viewBox="0 0 130 70"><path d="M19 21 H92 Q99.6 21 99.6 28 V70 H29 V36 Q28 28 19 21 Z" fill="#2ab7df" filter="drop-shadow(0 2px 8px rgba(0,0,0,.3))"/><circle cx="50.5" cy="42.5" r="2.6" fill="#333"/><circle cx="79" cy="42.5" r="2.6" fill="#333"/></svg></div>
<div class="a bx" style="left:894.0px;top:571.0px;width:3460.0px;height:586.0px;border:10px solid #ffc000;"></div>
<div class="a bx" style="left:892.0px;top:1201.2px;width:222.0px;height:68.5px;border:10px solid #ffc000;"></div>
<div class="a bx" style="left:926.0px;top:1322.0px;width:38.0px;height:751.8px;border:10px solid #ffc000;"></div>
<div class="a bx" style="left:997.0px;top:1320.0px;width:1214.0px;height:804.0px;border:10px solid #7030a0;"></div>
<div class="a bx" style="left:2241.5px;top:1321.2px;width:489.5px;height:796.8px;border:10px solid #92d050;"></div>
<div class="a bx" style="left:2763.6px;top:1351.3px;width:553.4px;height:766.7px;border:10px solid #00b0f0;"></div>
<div class="a bx" style="left:3347.0px;top:1347.0px;width:1007.0px;height:766.6px;border:10px solid #ff0000;"></div>
<div class="a bx" style="left:2381.3px;top:1210.3px;width:1972.7px;height:78.0px;border:10px solid #002060;"></div>
<div class="a bx" style="left:3925.0px;top:375.3px;width:442.8px;height:67.3px;border:10px solid #00b050;"></div>
<div class="a bx" style="left:3984.0px;top:499.2px;width:387.0px;height:47.8px;border:10px solid #0070c0;"></div>
<svg style="left:0;top:0" width="4398" height="2144" viewBox="0 0 4398 2144" fill="none" stroke-width="7" stroke-linecap="butt">
<polyline points="896,1037 806.3,1233.2 894,1256" stroke="#ffc000" stroke-linejoin="miter"/>
<line x1="806.3" y1="1233.2" x2="909" y2="1441" stroke="#ffc000"/>
<line x1="2004" y1="1267.5" x2="2083.7" y2="1321" stroke="#7030a0"/>
<line x1="2251.4" y1="1331" x2="2363" y2="1396.5" stroke="#92d050"/>
<line x1="2777.4" y1="1361" x2="2867.7" y2="1452.3" stroke="#00b0f0"/>
<line x1="3357" y1="1358.6" x2="3476" y2="1396.5" stroke="#ff0000"/>
<line x1="2322" y1="1219" x2="2382" y2="1219" stroke="#002060"/>
<line x1="3851.8" y1="381.3" x2="3926" y2="381.3" stroke="#00b050"/>
<line x1="3857" y1="526" x2="3985" y2="532.5" stroke="#0070c0"/>
</svg>
<div class="a" style="left:720.8px;top:1196.1px;font-size:78.1px;line-height:78.1px;color:#ffc000;-webkit-text-stroke:1.5px #ffc000;transform:scaleX(0.739);transform-origin:0 0;">E</div>
<div class="a" style="left:1932.7px;top:1233.6px;font-size:78.1px;line-height:78.1px;color:#7030a0;-webkit-text-stroke:1.5px #7030a0;transform:scaleX(1.094);transform-origin:0 0;">A</div>
<div class="a" style="left:2374.8px;top:1363.0px;font-size:75.0px;line-height:75.0px;color:#92d050;-webkit-text-stroke:1.5px #92d050;transform:scaleX(0.907);transform-origin:0 0;">B</div>
<div class="a" style="left:2882.1px;top:1431.0px;font-size:81.0px;line-height:81.0px;color:#00b0f0;-webkit-text-stroke:1.5px #00b0f0;transform:scaleX(0.881);transform-origin:0 0;">C</div>
<div class="a" style="left:3483.8px;top:1366.6px;font-size:79.6px;line-height:79.6px;color:#ff0000;-webkit-text-stroke:1.5px #ff0000;transform:scaleX(0.939);transform-origin:0 0;">D</div>
<div class="a" style="left:2267.5px;top:1190.6px;font-size:78.1px;line-height:78.1px;color:#002060;-webkit-text-stroke:1.5px #002060;transform:scaleX(0.842);transform-origin:0 0;">H</div>
<div class="a" style="left:3788.0px;top:359.4px;font-size:81.0px;line-height:81.0px;color:#00b050;-webkit-text-stroke:1.5px #00b050;transform:scaleX(0.914);transform-origin:0 0;">G</div>
<div class="a" style="left:3787.5px;top:477.4px;font-size:81.0px;line-height:81.0px;color:#0070c0;-webkit-text-stroke:1.5px #0070c0;transform:scaleX(0.719);transform-origin:0 0;">F</div>
</body>
</html>
